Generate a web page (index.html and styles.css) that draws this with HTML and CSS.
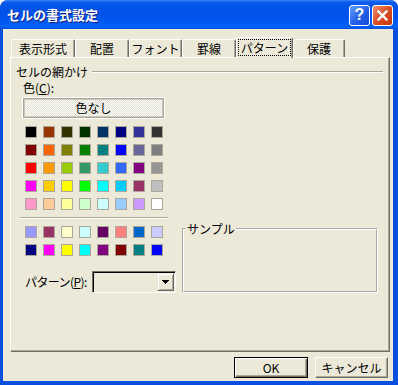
FILE: index.html
```html
<!DOCTYPE html>
<html lang="ja">
<head>
    <meta charset="UTF-8">
    <title>セルの書式設定</title>
    <link rel="stylesheet" href="styles.css">
</head>
<body>
    <div class="window">
        <div class="titlebar">
            <span class="title">セルの書式設定</span>
            <div class="title-btns">
                <div class="tbtn help">?</div>
                <div class="tbtn close">
                    <svg width="13" height="13" viewBox="0 0 13 13"><path d="M2.5 2.5L10.5 10.5M10.5 2.5L2.5 10.5" stroke="#fff" stroke-width="2.4" stroke-linecap="square"/></svg>
                </div>
            </div>
        </div>

        <div class="client">
            <!-- onglets -->
            <div class="tabs">
                <div class="tab tab-num">表示形式</div>
                <div class="tab tab-align">配置</div>
                <div class="tab tab-font">フォント</div>
                <div class="tab tab-border">罫線</div>
                <div class="tab tab-pattern active"><span class="focus">パターン</span></div>
                <div class="tab tab-protect">保護</div>
            </div>

            <div class="panel">
                <div class="group-head"><span>セルの網かけ</span><span class="etch"></span></div>
                <div class="cols">
                    <div class="left">
                        <div class="lbl">色(<u>C</u>):</div>
                        <div class="none-btn">色なし</div>
                        <div class="swatches" id="std-colors"></div>
                        <div class="sep"></div>
                        <div class="swatches" id="chart-colors"></div>
                        <div class="pattern-row">
                            <span class="pattern-lbl">パターン(<u>P</u>):</span>
                            <div class="combo">
                                <div class="combo-btn">
                                    <svg width="7" height="4" viewBox="0 0 7 4" shape-rendering="crispEdges"><path d="M0 0h7v1h-1v1h-1v1h-1v1h-1v-1h-1v-1h-1v-1h-1z" fill="#000"/></svg>
                                </div>
                            </div>
                        </div>
                    </div>
                    <fieldset class="sample">
                        <legend>サンプル</legend>
                    </fieldset>
                </div>
            </div>

            <div class="actions">
                <div class="btn btn-ok">OK</div>
                <div class="btn btn-cancel">キャンセル</div>
            </div>
        </div>
    </div>

    <script>
        // palette Excel par défaut (56 couleurs)
        const stdColors = [
            '#000000', '#993300', '#333300', '#003300', '#003366', '#000080', '#333399', '#333333',
            '#800000', '#FF6600', '#808000', '#008000', '#008080', '#0000FF', '#666699', '#808080',
            '#FF0000', '#FF9900', '#99CC00', '#339966', '#33CCCC', '#3366FF', '#800080', '#969696',
            '#FF00FF', '#FFCC00', '#FFFF00', '#00FF00', '#00FFFF', '#00CCFF', '#993366', '#C0C0C0',
            '#FF99CC', '#FFCC99', '#FFFF99', '#CCFFCC', '#CCFFFF', '#99CCFF', '#CC99FF', '#FFFFFF'
        ];
        const chartColors = [
            '#9999FF', '#993366', '#FFFFCC', '#CCFFFF', '#660066', '#FF8080', '#0066CC', '#CCCCFF',
            '#000080', '#FF00FF', '#FFFF00', '#00FFFF', '#800080', '#800000', '#008080', '#0000FF'
        ];

        function fillSwatches(id, colors) {
            const box = document.getElementById(id);
            colors.forEach(c => {
                const d = document.createElement('div');
                d.className = 'sw';
                d.style.background = c;
                box.appendChild(d);
            });
        }

        fillSwatches('std-colors', stdColors);
        fillSwatches('chart-colors', chartColors);
    </script>
</body>
</html>
```

FILE: styles.css
```css
body {
    margin: 0;
    background: #fff;
    font-family: "Noto Sans CJK JP", sans-serif;
    font-size: 12px;
    color: #000;
}
.window {
    width: 398px;
    height: 385px;
    display: flex;
    flex-direction: column;
    background: #0b4fe0;
    border-radius: 8px 8px 0 0;
    overflow: hidden;
}
.titlebar {
    height: 29px;
    flex: none;
    box-sizing: border-box;
    padding: 1px 5px 0 7px;
    display: flex;
    align-items: center;
    justify-content: space-between;
    background: linear-gradient(#3a86f6 0, #0b5deb 2px, #0254e8 6px, #0052ea 14px, #0058ef 21px, #0063f7 26px, #0050e0 29px);
}
.title {
    color: #fff;
    font-weight: bold;
    font-size: 13px;
    line-height: 16px;
    text-shadow: 1px 1px 0 #0f1f8a;
}
.title-btns {
    display: flex;
    gap: 2px;
}
.tbtn {
    width: 21px;
    height: 21px;
    box-sizing: border-box;
    border: 1px solid #fff;
    border-radius: 3px;
    display: flex;
    align-items: center;
    justify-content: center;
}
.help {
    background: linear-gradient(135deg, #6aa2fa, #2763ea 50%, #1448d2);
    color: #fff;
    font: bold 16px "Liberation Sans", sans-serif;
}
.close {
    background: linear-gradient(135deg, #f09070, #dc4e24 50%, #c2380e);
}
.client {
    flex: 1;
    margin: 0 5px 4px 3px;
    padding: 8px 0 0 7px;
    background: #ece9d8;
    display: flex;
    flex-direction: column;
}
.tabs {
    display: flex;
    align-items: flex-end;
    height: 20px;
    margin-left: 1px;
}
.tab {
    height: 18px;
    box-sizing: border-box;
    border-top: 1px solid #fff;
    border-left: 1px solid #fff;
    border-right: 1px solid #716f64;
    border-radius: 2px 2px 0 0;
    box-shadow: inset -1px 0 0 #aca899;
    text-align: center;
    line-height: 16px;
    padding-top: 1px;
    background: #ece9d8;
}
.tab-num { width: 64px; }
.tab-align { width: 54px; }
.tab-font { width: 53px; }
.tab-border { width: 54px; }
.tab-pattern { width: 57px; }
.tab-protect { width: 52px; }
.tab.active {
    height: 21px;
    margin-bottom: -1px;
    position: relative;
    z-index: 1;
    padding-top: 2px;
}
.focus {
    display: inline-block;
    outline: 1px dotted #000;
    padding: 0 2px;
    line-height: 15px;
}
.panel {
    width: 380px;
    height: 295px;
    box-sizing: border-box;
    border: 1px solid;
    border-color: #fff #716f64 #716f64 #fff;
    box-shadow: inset -1px -1px 0 #aca899;
    padding: 7px 5px 0 5px;
}
.group-head {
    display: flex;
    align-items: center;
    height: 14px;
    line-height: 14px;
}
.etch {
    flex: 1;
    margin: 0 1px 0 4px;
    border-top: 1px solid #aca899;
    border-bottom: 1px solid #fff;
}
.cols {
    display: flex;
}
.left {
    width: 166px;
    flex: none;
}
.lbl {
    margin: 2px 0 0 7px;
    line-height: 14px;
}
.none-btn {
    margin: 2px 0 0 6px;
    width: 143px;
    height: 22px;
    box-sizing: border-box;
    border: 1px solid #fff;
    box-shadow: inset 0 0 0 1px #aca899, inset 0 0 0 2px #cbc8ba;
    background: repeating-conic-gradient(#fdfdfb 0 25%, #e2dfd3 0 50%) 0 0 / 2px 2px;
    text-align: center;
    line-height: 20px;
}
.swatches {
    display: grid;
    grid-template-columns: repeat(8, 12px);
    grid-auto-rows: 12px;
    gap: 6px;
    margin: 7px 0 0 9px;
}
.sw {
    border: 1px solid #aca899;
    box-sizing: border-box;
}
.sep {
    margin: 7px 0 0 4px;
    width: 148px;
    border-top: 1px solid #aca899;
    border-bottom: 1px solid #fff;
}
.pattern-row {
    display: flex;
    align-items: center;
    margin-top: 15px;
}
.pattern-lbl {
    margin-left: 9px;
    width: 67px;
    white-space: nowrap;
    line-height: 14px;
    letter-spacing: -0.6px;
}
.combo {
    width: 84px;
    height: 22px;
    box-sizing: border-box;
    border: 1px solid;
    border-color: #716f64 #fff #fff #716f64;
    box-shadow: inset 1px 1px 0 #000;
    padding: 1px;
    display: flex;
    justify-content: flex-end;
}
.combo-btn {
    width: 17px;
    height: 18px;
    box-sizing: border-box;
    border: 1px solid;
    border-color: #ece9d8 #716f64 #716f64 #ece9d8;
    box-shadow: inset 1px 1px 0 #fff, inset -1px -1px 0 #aca899;
    display: flex;
    align-items: center;
    justify-content: center;
}
.sample {
    align-self: flex-end;
    width: 196px;
    height: 71px;
    box-sizing: border-box;
    margin: 0;
    padding: 0;
    min-width: 0;
    border: 2px groove #fff;
}
.sample legend {
    margin-left: 2px;
    padding: 0 1px;
    line-height: 14px;
}
.actions {
    display: flex;
    justify-content: flex-end;
    gap: 7px;
    margin-top: 5px;
    padding-right: 5px;
}
.btn {
    height: 21px;
    box-sizing: border-box;
    line-height: 19px;
    text-align: center;
    background: #ece9d8;
    border: 1px solid;
    border-color: #fff #716f64 #716f64 #fff;
    box-shadow: inset -1px -1px 0 #aca899;
}
.btn-ok {
    width: 74px;
    border-color: #000;
    box-shadow: inset 1px 1px 0 #fff, inset -1px -1px 0 #716f64, inset -2px -2px 0 #aca899;
}
.btn-cancel {
    width: 73px;
}
```
